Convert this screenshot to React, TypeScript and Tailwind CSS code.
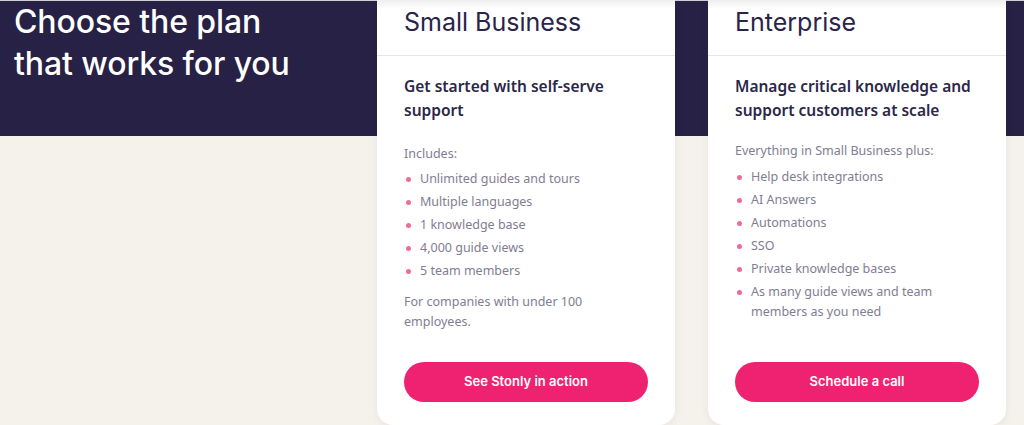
import React from "react";

const body = { fontFamily: '"Noto Sans", "Open Sans", sans-serif' };
const display = { fontFamily: 'Inter, "Noto Sans", sans-serif' };

function Bullet({ children }: { children: React.ReactNode }) {
  return (
    <li className="flex items-start gap-[9px] pl-[2px] leading-[20px]">
      <span className="mt-[8px] h-[5px] w-[5px] shrink-0 rounded-full bg-[#f06a9a]" />
      <span>{children}</span>
    </li>
  );
}

function Card({
  title,
  subtitle,
  intro,
  items,
  footer,
  cta,
  introTop,
  listTop,
}: {
  title: string;
  subtitle: React.ReactNode;
  intro: string;
  items: React.ReactNode[];
  footer?: React.ReactNode;
  cta: string;
  introTop: string;
  listTop: string;
}) {
  return (
    <div className="flex h-[425px] w-[298px] shrink-0 flex-col overflow-hidden rounded-b-[16px] bg-white shadow-[0_2px_10px_rgba(30,25,60,0.06)]">
      <div className="h-[56px] border-b border-[#e6e5ea] bg-[linear-gradient(to_bottom,#eeeeee,#ffffff_9px)] px-[27px] pt-[6px]">
        <h2 style={display} className="text-[25px] font-normal leading-[32px] tracking-[0px] text-[#29244a]">
          {title}
        </h2>
      </div>
      <div style={body} className="flex flex-1 flex-col px-[27px] pt-[18px]">
        <p className="text-[15.5px] font-semibold leading-[24px] text-[#2b2749]">{subtitle}</p>
        <p className={`${introTop} text-[12.5px] leading-[20px] text-[#7f7d92]`}>{intro}</p>
        <ul className={`${listTop} flex flex-col gap-[3px] text-[12.5px] text-[#7f7d92]`}>
          {items.map((it, i) => (
            <Bullet key={i}>{it}</Bullet>
          ))}
        </ul>
        {footer && <p className="mt-[11px] text-[12.5px] leading-[20px] text-[#7f7d92]">{footer}</p>}
        <div className="flex-1" />
        <button
          style={display}
          className="mb-[23px] h-[40px] w-full rounded-full bg-[#ee2270] text-[13px] font-semibold text-white"
        >
          {cta}
        </button>
      </div>
    </div>
  );
}

export default function App() {
  return (
    <div className="h-[425px] w-[1024px] overflow-hidden bg-[linear-gradient(to_bottom,#cfcdd6_0px,#cfcdd6_1px,#272245_1px,#272245_136px,#f5f1eb_136px)]">
      <div className="flex gap-[33px] pl-[14px]">
        <div className="w-[330px] shrink-0">
          <h1 style={display} className="mt-[1px] text-[32px] font-medium leading-[42px] tracking-[-0.1px] text-white">
            Choose the plan
            <br />
            that works for you
          </h1>
        </div>
        <Card
          title="Small Business"
          subtitle={
            <>
              Get started with self-serve
              <br />
              support
            </>
          }
          intro="Includes:"
          introTop="mt-[22px]"
          listTop="mt-[5px]"
          items={[
            "Unlimited guides and tours",
            "Multiple languages",
            "1 knowledge base",
            "4,000 guide views",
            "5 team members",
          ]}
          footer={
            <>
              For companies with under 100
              <br />
              employees.
            </>
          }
          cta="See Stonly in action"
        />
        <Card
          title="Enterprise"
          subtitle={
            <>
              Manage critical knowledge and
              <br />
              support customers at scale
            </>
          }
          intro="Everything in Small Business plus:"
          introTop="mt-[19px]"
          listTop="mt-[6px]"
          items={[
            "Help desk integrations",
            "AI Answers",
            "Automations",
            "SSO",
            "Private knowledge bases",
            <>
              As many guide views and team
              <br />
              members as you need
            </>,
          ]}
          cta="Schedule a call"
        />
      </div>
    </div>
  );
}
